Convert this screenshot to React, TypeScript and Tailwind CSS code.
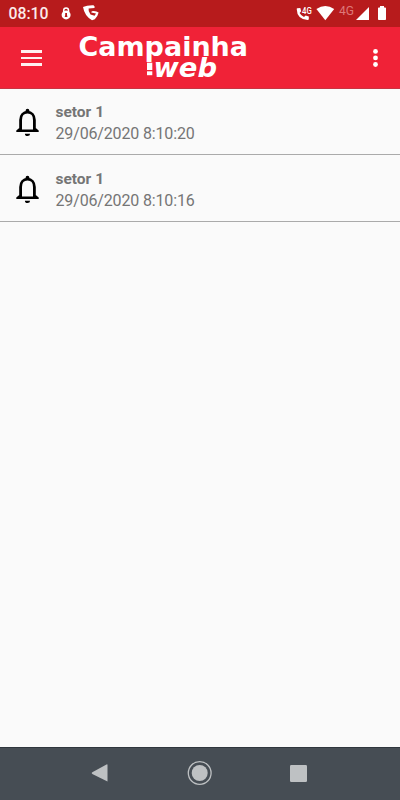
const entries = [
  { sector: 'setor 1', time: '29/06/2020 8:10:20', rowClass: 'h-[66px] pt-[13px]' },
  { sector: 'setor 1', time: '29/06/2020 8:10:16', rowClass: 'h-[67px] pt-[14px]' },
];

function StatusBar() {
  return (
    <div className="h-[27px] shrink-0 bg-[#b71b1c] text-white">
      <svg width="400" height="27" viewBox="0 0 400 27" fill="#fff" fontFamily="Roboto, sans-serif">
        <text x="8.5" y="19.4" fontSize="16" fontWeight="500" textLength="40" lengthAdjust="spacingAndGlyphs" fill="#fbeaea">08:10</text>
        <path d="M63.7 12V10.3a2.4 2.4 0 0 1 4.8 0V12" fill="none" stroke="#fff" strokeWidth="1.5" />
        <circle cx="66.1" cy="14.9" r="4.5" />
        <path d="M65.2 13.1h1.8v2l.5 2h-2.8l.5-2z" fill="#b71b1c" />
        <path d="M83 7Q87 5 93.5 5.2Q95.2 6.5 94.5 8L88.6 8.6Q88 11.5 90.5 14.5L94.6 15.8L96 13.6L91.2 12.4L91.8 11.2Q96 10.6 98.6 12.6Q98 16 94.8 19.3L92 20.2Q84.5 16 83 7Z" />
        <path d="M297.3 8.2L300.3 8L301.2 11.3L299.6 13Q301.1 15.7 304 17L305.6 15.5L308.8 16.4V19Q308.8 20 307.7 20Q297 19.4 296.7 9Q296.7 8.2 297.3 8.2Z" />
        <text x="302.1" y="13.7" fontSize="8.5" fontWeight="500" textLength="9.8" lengthAdjust="spacingAndGlyphs">4G</text>
        <path d="M316.4 9Q325.3 3 334.2 9L325.3 20.2Z" />
        <text x="339" y="14.6" fontSize="12" textLength="15" lengthAdjust="spacingAndGlyphs" fill="#dd7879">4G</text>
        <path d="M369 7V20H356Z" />
        <path d="M380 7.5V6h4v1.5h1.2q.8 0 .8.8v11q0 .8-.8.8h-6.4q-.8 0-.8-.8v-11q0-.8.8-.8z" />
      </svg>
    </div>
  );
}

function Logo() {
  return (
    <svg
      width="174"
      height="50"
      viewBox="76 33 174 50"
      fill="#fff"
      fontFamily="'DejaVu Sans', sans-serif"
      fontWeight="700"
      className="shrink-0"
    >
      <text x="78.5" y="56" fontSize="26" textLength="169.5" lengthAdjust="spacingAndGlyphs">Campainha</text>
      <rect x="147" y="62.7" width="5.3" height="7.3" />
      <rect x="147" y="71.3" width="5.3" height="3.9" />
      <text x="153.5" y="77.3" fontSize="26" fontStyle="italic" textLength="63.5" lengthAdjust="spacingAndGlyphs">web</text>
    </svg>
  );
}

function AppBar() {
  return (
    <header className="flex h-[62px] shrink-0 items-start border-b border-[#c93442] bg-[#f02237]">
      <button aria-label="Menu" className="mt-[23px] ml-[21px] flex w-[21px] flex-col gap-1">
        <span className="h-[2.5px] w-full bg-[#fff0f0]" />
        <span className="h-[2.5px] w-full bg-[#fff0f0]" />
        <span className="h-[2.5px] w-full bg-[#fff0f0]" />
      </button>
      <div className="mt-[6px] ml-[34px]">
        <Logo />
      </div>
      <button aria-label="Mais" className="mt-[22px] mr-[22px] ml-auto">
        <svg width="5" height="18" viewBox="0 0 5 18" fill="#fff">
          <circle cx="2.5" cy="2.4" r="2.4" />
          <circle cx="2.5" cy="8.9" r="2.4" />
          <circle cx="2.5" cy="15.5" r="2.4" />
        </svg>
      </button>
    </header>
  );
}

function Bell() {
  return (
    <svg width="24" height="30" viewBox="0 0 24 30" className="mt-[5px] ml-4 shrink-0">
      <path d="M4.6 23V13C4.6 8.3 7.3 5.2 11.5 5.2S18.4 8.3 18.4 13V23" fill="none" stroke="#000" strokeWidth="2.8" />
      <path d="M9.6 5V3.7a1.9 1.9 0 0 1 3.8 0V5zM3.2 21L.3 23.5V25.1H22.7V23.5L19.8 21L18 22.5H5zM8.9 26.7H14.1A2.6 2.3 0 0 1 8.9 26.7Z" />
    </svg>
  );
}

export default function App() {
  return (
    <div className="flex h-[800px] w-[400px] flex-col overflow-hidden bg-[#fafafa] font-['Roboto',sans-serif]">
      <StatusBar />
      <AppBar />
      <main className="flex-1">
        {entries.map((entry) => (
          <div key={entry.time} className={`flex border-b border-[#aaa] ${entry.rowClass}`}>
            <Bell />
            <div className="ml-[15.5px] text-[#757575]">
              <div className="text-[15.5px] leading-[21px] font-bold">{entry.sector}</div>
              <div className="text-base leading-[21px] tracking-[-0.15px]">{entry.time}</div>
            </div>
          </div>
        ))}
      </main>
      <nav className="h-[53px] shrink-0 border-t border-[#30363d] bg-[#464d54]">
        <svg width="400" height="52" viewBox="0 748 400 52" fill="#bec1c3">
          <path d="M107.5 765V781.5L92.3 773.9Q91 773 92.3 772.2L106.5 764.5Q107.5 764 107.5 765Z" />
          <circle cx="199.7" cy="773" r="11.4" fill="none" stroke="#bec1c3" strokeWidth="1.3" />
          <circle cx="199.7" cy="773" r="8" />
          <rect x="290" y="765" width="17" height="17" rx="1.2" />
        </svg>
      </nav>
    </div>
  );
}
